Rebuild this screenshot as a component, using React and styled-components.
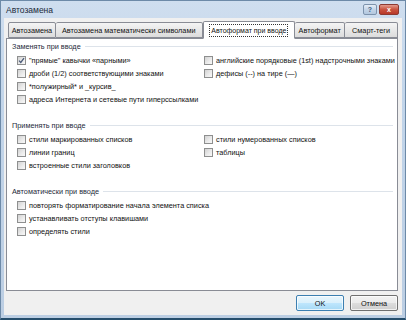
import React from "react";
import styled, { createGlobalStyle } from "styled-components";

const GlobalStyle = createGlobalStyle`
  html, body {
    margin: 0;
    padding: 0;
    background: #ffffff;
  }
`;

const tabs = [
  { label: "Автозамена", width: 48 },
  { label: "Автозамена математически символами", width: 147 },
  { label: "Автоформат при вводе", width: 93, active: true },
  { label: "Автоформат", width: 50 },
  { label: "Смарт-теги", width: 53 },
];

const sections = [
  {
    title: "Заменять при вводе",
    left: [
      { text: "\"прямые\" кавычки «парными»", checked: true },
      { text: "дроби (1/2) соответствующими знаками" },
      { text: "*полужирный* и _курсив_" },
      { text: "адреса Интернета и сетевые пути гиперссылками" },
    ],
    right: [
      { text: "английские порядковые (1st) надстрочными знаками" },
      { text: "дефисы (--) на тире (—)" },
    ],
  },
  {
    title: "Применять при вводе",
    left: [
      { text: "стили маркированных списков" },
      { text: "линии границ" },
      { text: "встроенные стили заголовков" },
    ],
    right: [{ text: "стили нумерованных списков" }, { text: "таблицы" }],
  },
  {
    title: "Автоматически при вводе",
    left: [
      { text: "повторять форматирование начала элемента списка" },
      { text: "устанавливать отступы клавишами" },
      { text: "определять стили" },
    ],
    right: [],
  },
];

const App = () => {
  return (
    <>
      <GlobalStyle />
      <Window>
        <TitleBar>
          <TitleText>Автозамена</TitleText>
          <Controls>
            <CtrlButton $kind="help">?</CtrlButton>
            <CtrlButton $kind="close">x</CtrlButton>
          </Controls>
        </TitleBar>
        <Client>
          <TabRow>
            {tabs.map((tab) => (
              <Tab key={tab.label} $width={tab.width} $active={tab.active}>
                {tab.active ? <Focus>{tab.label}</Focus> : tab.label}
              </Tab>
            ))}
          </TabRow>
          <Panel>
            {sections.map((section, i) => (
              <Section key={section.title} $first={i === 0}>
                <SectionHeader>
                  <span>{section.title}</span>
                </SectionHeader>
                <Options>
                  <Column>
                    {section.left.map((opt) => (
                      <Option key={opt.text}>
                        <Box>
                          {opt.checked && (
                            <svg width="7" height="7" viewBox="0 0 7 7">
                              <path
                                d="M1 3.6 L2.8 5.4 L6 1.2"
                                fill="none"
                                stroke="#4a5a78"
                                strokeWidth="1.3"
                              />
                            </svg>
                          )}
                        </Box>
                        {opt.text}
                      </Option>
                    ))}
                  </Column>
                  <Column>
                    {section.right.map((opt) => (
                      <Option key={opt.text}>
                        <Box />
                        {opt.text}
                      </Option>
                    ))}
                  </Column>
                </Options>
              </Section>
            ))}
          </Panel>
          <Footer>
            <Button $default>OK</Button>
            <Button>Отмена</Button>
          </Footer>
        </Client>
      </Window>
    </>
  );
};

const Window = styled.div`
  width: 406px;
  height: 320px;
  box-sizing: border-box;
  display: flex;
  flex-direction: column;
  background: linear-gradient(#cfdeef, #c2d5ea 30%, #bccee3);
  border: 1px solid #6d8aa8;
  border-bottom: 2px solid #264e6c;
  padding: 0 3px 3px;
  font-family: "Liberation Sans", Arial, sans-serif;
  font-size: 7.3px;
  color: #111111;
`;

const TitleBar = styled.div`
  height: 17px;
  display: flex;
  align-items: center;
  padding-left: 2px;
  flex-shrink: 0;
`;

const TitleText = styled.span`
  font-size: 8.5px;
  color: #1b2a3a;
`;

const Controls = styled.div`
  margin-left: auto;
  display: flex;
  gap: 2px;
  align-self: flex-start;
  margin-top: 3px;
  margin-right: 3px;
`;

const CtrlButton = styled.div`
  width: ${(p) => (p.$kind === "close" ? "20px" : "14px")};
  height: 11px;
  box-sizing: border-box;
  border: 1px solid ${(p) => (p.$kind === "close" ? "#8d3a32" : "#7d93ad")};
  border-radius: 2px;
  background: ${(p) =>
    p.$kind === "close"
      ? "linear-gradient(#e29a8c, #c9533f 50%, #b8392a)"
      : "linear-gradient(#e4edf7, #c3d4e8 50%, #b3c8df)"};
  color: ${(p) => (p.$kind === "close" ? "#ffffff" : "#41607f")};
  font-size: 7px;
  font-weight: bold;
  display: flex;
  align-items: center;
  justify-content: center;
  line-height: 1;
`;

const Client = styled.div`
  flex: 1;
  display: flex;
  flex-direction: column;
  background: #f0f0f0;
  padding: 0 4px 0 2px;
  min-height: 0;
`;

const TabRow = styled.div`
  height: 20px;
  display: flex;
  align-items: flex-end;
  padding-left: 2px;
  flex-shrink: 0;
  position: relative;
  z-index: 1;
`;

const Tab = styled.div`
  width: ${(p) => p.$width}px;
  height: ${(p) => (p.$active ? "18px" : "16px")};
  box-sizing: border-box;
  border: 1px solid #898c95;
  border-left-width: ${(p) => (p.$active ? "1px" : "0")};
  border-bottom: ${(p) => (p.$active ? "1px solid #ffffff" : "1px solid #898c95")};
  border-radius: 2px 2px 0 0;
  background: ${(p) =>
    p.$active ? "#ffffff" : "linear-gradient(#f4f4f4, #e8e8e8 50%, #dcdcdc)"};
  display: flex;
  align-items: center;
  justify-content: center;
  white-space: nowrap;
  color: #111111;
  margin-bottom: ${(p) => (p.$active ? "-1px" : "0")};
  &:first-child {
    border-left-width: 1px;
  }
`;

const Focus = styled.span`
  border: 1px dotted #333333;
  padding: 0 1px;
  line-height: 11px;
  font-size: 7px;
`;

const Panel = styled.div`
  flex: 1;
  background: #ffffff;
  border: 1px solid #898c95;
  padding: 1px 4px 0 5px;
  display: flex;
  flex-direction: column;
  min-height: 0;
`;

const Section = styled.div`
  margin-top: ${(p) => (p.$first ? "0" : "13px")};
  display: flex;
  flex-direction: column;
  gap: 2px;
`;

const SectionHeader = styled.div`
  height: 12px;
  display: flex;
  align-items: center;
  gap: 4px;
  color: #1e2b3a;
  &::after {
    content: "";
    flex: 1;
    border-top: 1px solid #dde3ea;
  }
`;

const Options = styled.div`
  display: grid;
  grid-template-columns: 187px 1fr;
  padding-left: 5px;
`;

const Column = styled.div`
  display: flex;
  flex-direction: column;
`;

const Option = styled.div`
  height: 13px;
  display: flex;
  align-items: center;
  gap: 3px;
  white-space: nowrap;
`;

const Box = styled.span`
  width: 9px;
  height: 9px;
  box-sizing: border-box;
  border: 1px solid #8e8f8f;
  background: linear-gradient(135deg, #d2d2d2, #ececec 60%, #f8f8f8);
  display: flex;
  align-items: center;
  justify-content: center;
  flex-shrink: 0;
`;

const Footer = styled.div`
  height: 24px;
  flex-shrink: 0;
  display: flex;
  align-items: center;
  justify-content: flex-end;
  gap: 6px;
`;

const Button = styled.div`
  width: 48px;
  height: 16px;
  box-sizing: border-box;
  border: 1px solid ${(p) => (p.$default ? "#3c7fb1" : "#707070")};
  border-radius: 2px;
  background: ${(p) =>
    p.$default
      ? "linear-gradient(#eaf6fd, #d9f0fc 50%, #bee6fd 51%, #a7d9f5)"
      : "linear-gradient(#f2f2f2, #ebebeb 50%, #dddddd 51%, #cfcfcf)"};
  box-shadow: inset 0 0 0 1px rgba(255, 255, 255, 0.7);
  display: flex;
  align-items: center;
  justify-content: center;
  color: #111111;
`;

export default App;
